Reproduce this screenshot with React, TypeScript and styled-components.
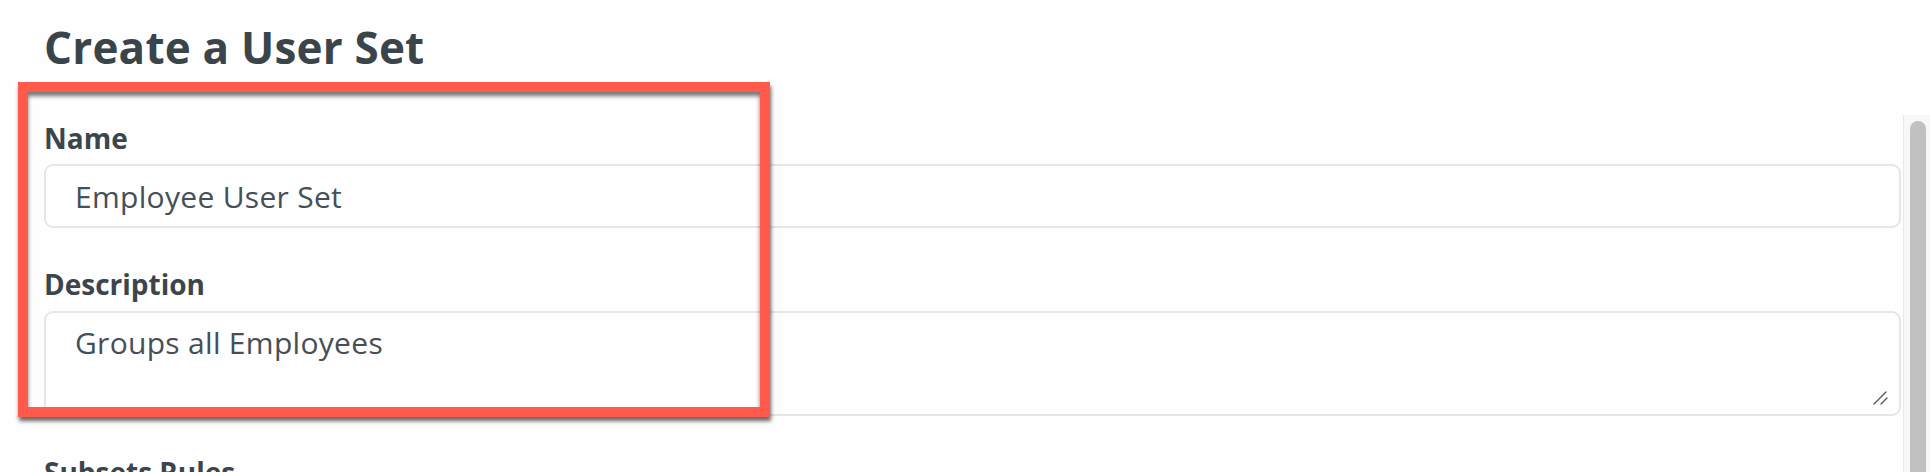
import React from "react";
import styled, { createGlobalStyle } from "styled-components";

const FONT = `"Open Sans", "Lato", "Liberation Sans", sans-serif`;

const Global = createGlobalStyle`
  html, body {
    margin: 0;
    padding: 0;
    background: #fefefe;
    overflow: hidden;
  }
  body {
    font-family: ${FONT};
    color: #3c454c;
  }
`;

const Page = styled.div`
  position: relative;
  width: 1930px;
  height: 472px;
  display: flex;
  flex-direction: column;
  overflow: hidden;
`;

const Title = styled.h1`
  margin: 21px 0 0 44px;
  font-size: 44px;
  font-weight: 700;
  line-height: 1.2;
  color: #3a444b;
  letter-spacing: 0.2px;
`;

const Body = styled.div`
  margin-top: 41px;
  display: flex;
  flex: 1;
  min-height: 0;
`;

const Content = styled.div`
  flex: 1;
  min-width: 0;
  overflow: hidden;
`;

const ScrollTrack = styled.div`
  width: 27px;
  flex-shrink: 0;
  box-sizing: border-box;
  background: #f8f8f8;
  border-left: 1px solid #e8e8e8;
  padding: 6px 4px 0 6px;
  display: flex;
  flex-direction: column;
`;

const ScrollThumb = styled.div`
  flex: 1;
  background: #c1c1c1;
  border-radius: 8px 8px 0 0;
`;

const Form = styled.form`
  display: flex;
  flex-direction: column;
  gap: 40px;
  padding: 7px 2px 0 44px;
`;

const Field = styled.div`
  display: flex;
  flex-direction: column;
  gap: 9px;
`;

const Label = styled.label`
  font-size: 28px;
  font-weight: 700;
  line-height: 1.2;
  color: #3c454c;
`;

const fieldBase = `
  box-sizing: border-box;
  width: 100%;
  border: 2px solid #e6e6e6;
  border-radius: 9px;
  background: #fefefe;
  font-family: ${FONT};
  font-size: 30px;
  color: #464f56;
  outline: none;
`;

const TextInput = styled.input`
  ${fieldBase}
  height: 64px;
  padding: 0 29px;
  letter-spacing: 0.3px;
`;

const AreaWrap = styled.div`
  position: relative;
`;

const TextArea = styled.textarea`
  ${fieldBase}
  height: 105px;
  line-height: 1.2;
  padding: 12px 29px;
  resize: none;
  display: block;
  letter-spacing: 0.3px;
`;

const ResizeGrip = styled.svg`
  position: absolute;
  right: 13px;
  bottom: 9px;
  width: 16px;
  height: 16px;
  pointer-events: none;
`;

const Highlight = styled.div`
  position: absolute;
  left: 18px;
  top: 82px;
  width: 752px;
  height: 335px;
  box-sizing: border-box;
  border: 10px solid #ff5a4b;
  box-shadow: 1px 4px 4px rgba(0, 0, 0, 0.6), inset 0 4px 4px rgba(0, 0, 0, 0.55);
  pointer-events: none;
`;

export default function App() {
  return (
    <Page>
      <Global />
      <Title>Create a User Set</Title>
      <Body>
        <Content>
          <Form>
            <Field>
              <Label htmlFor="name">Name</Label>
              <TextInput id="name" defaultValue="Employee User Set" />
            </Field>
            <Field>
              <Label htmlFor="desc">Description</Label>
              <AreaWrap>
                <TextArea id="desc" defaultValue="Groups all Employees" />
                <ResizeGrip viewBox="0 0 16 16">
                  <path
                    d="M2 13 L14 1 M9 13 L15 7"
                    stroke="#555a5e"
                    strokeWidth="1.4"
                    strokeLinecap="round"
                    fill="none"
                  />
                </ResizeGrip>
              </AreaWrap>
            </Field>
            <Field>
              <Label>Subsets Rules</Label>
            </Field>
          </Form>
        </Content>
        <ScrollTrack>
          <ScrollThumb />
        </ScrollTrack>
      </Body>
      <Highlight />
    </Page>
  );
}
